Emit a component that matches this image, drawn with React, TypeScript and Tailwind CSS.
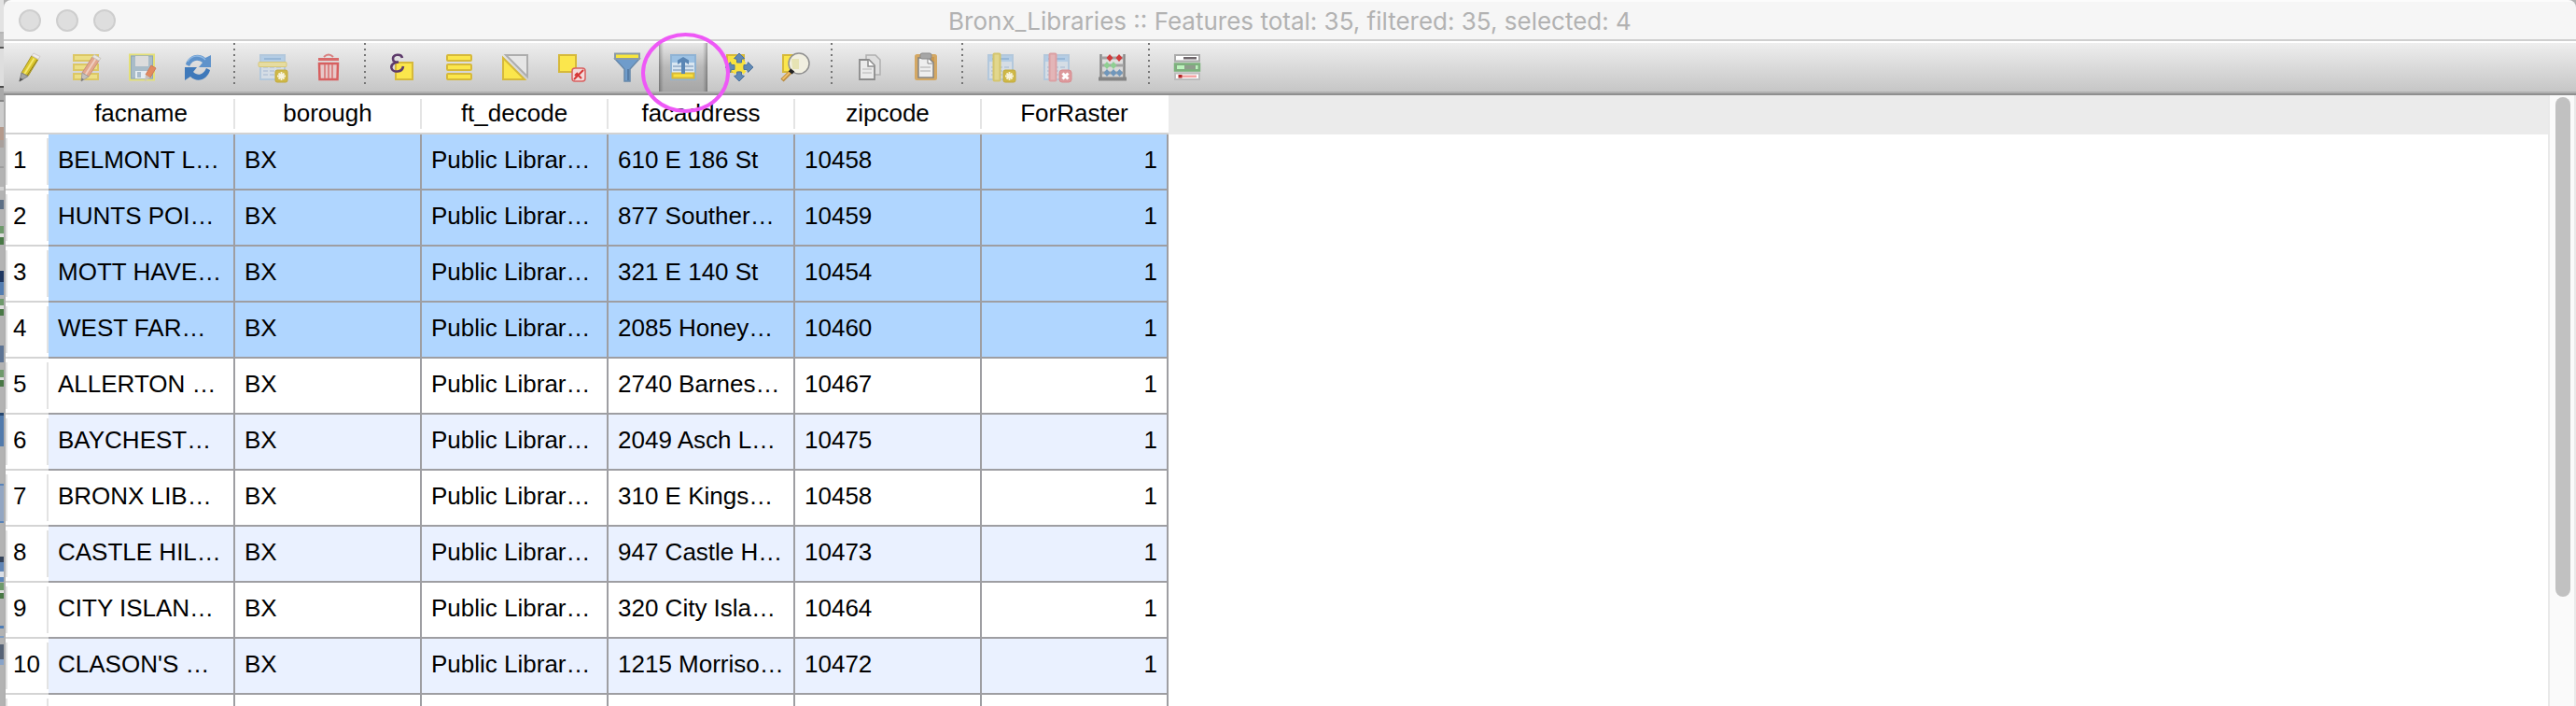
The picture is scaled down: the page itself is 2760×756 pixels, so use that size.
import type { ReactNode } from "react";

type Row = {
  cells: string[];
  selected?: boolean;
};

const columns = ["facname", "borough", "ft_decode", "facaddress", "zipcode", "ForRaster"];

const rows: Row[] = [
  { cells: ["BELMONT L…", "BX", "Public Librar…", "610 E 186 St", "10458", "1"], selected: true },
  { cells: ["HUNTS POI…", "BX", "Public Librar…", "877 Souther…", "10459", "1"], selected: true },
  { cells: ["MOTT HAVE…", "BX", "Public Librar…", "321 E 140 St", "10454", "1"], selected: true },
  { cells: ["WEST FAR…", "BX", "Public Librar…", "2085 Honey…", "10460", "1"], selected: true },
  { cells: ["ALLERTON …", "BX", "Public Librar…", "2740 Barnes…", "10467", "1"] },
  { cells: ["BAYCHEST…", "BX", "Public Librar…", "2049 Asch L…", "10475", "1"] },
  { cells: ["BRONX LIB…", "BX", "Public Librar…", "310 E Kings…", "10458", "1"] },
  { cells: ["CASTLE HIL…", "BX", "Public Librar…", "947 Castle H…", "10473", "1"] },
  { cells: ["CITY ISLAN…", "BX", "Public Librar…", "320 City Isla…", "10464", "1"] },
  { cells: ["CLASON'S …", "BX", "Public Librar…", "1215 Morriso…", "10472", "1"] },
];

function Icon({ children }: { children: ReactNode }) {
  return (
    <svg viewBox="0 0 36 36" className="size-9 shrink-0" fill="none" aria-hidden="true">
      {children}
    </svg>
  );
}

function ToolButton({ label, active, children }: { label: string; active?: boolean; children: ReactNode }) {
  return (
    <button
      type="button"
      aria-label={label}
      aria-pressed={active}
      className={
        active
          ? "flex h-[52px] w-[52px] shrink-0 items-center justify-center bg-[linear-gradient(90deg,#00000050_0,#00000028_2px,transparent_5px,transparent_47px,#00000028_50px,#00000050_52px),linear-gradient(#e8e8e8,#b9b9b9_50%,#a6a6a6)]"
          : "flex h-[52px] w-[52px] shrink-0 items-center justify-center"
      }
    >
      <Icon>{children}</Icon>
    </button>
  );
}

function Separator() {
  return (
    <div className="mr-0.5 flex w-2.5 shrink-0 justify-center pb-1">
      <div className="h-11 w-0.5 bg-[repeating-linear-gradient(#757575_0px,#757575_2px,transparent_2px,transparent_6px)]" />
    </div>
  );
}

function Pencil({ body, dark }: { body: string; dark: string }) {
  return (
    <>
      <path d="M20 7 27 11 16 28 9 24Z" fill={body} stroke={dark} strokeWidth="1" />
      <path d="M23.500 9 12.500 26" stroke="#fff" strokeOpacity=".45" strokeWidth="2" />
      <path d="M20 7 22 4.500 29 8.500 27 11Z" fill="#e9e6e2" stroke="#c9c5c0" strokeWidth="1" />
      <path d="M9 24 16 28 8 33Z" fill="#c4c0bd" stroke="#a39e9a" strokeWidth="1" />
      <path d="M8.500 29.500 11 31 8 33Z" fill="#777" />
    </>
  );
}

function PaleGrid() {
  return (
    <>
      <rect x="5" y="5" width="26" height="26" fill="#d5dde5" stroke="#b3c8dc" strokeWidth="2" />
      <rect x="6" y="6" width="24" height="6" fill="#b4cde5" />
      <path d="M9 9H27" stroke="#8fb0d2" strokeWidth="1.500" />
      <path d="M8 18H28M8 22H28M8 26H28" stroke="#b5c4d8" strokeWidth="1.500" strokeDasharray="5 2" />
    </>
  );
}

function StarBadge() {
  return (
    <>
      <rect x="21" y="21" width="13" height="13" rx="2" fill="#cfb847" stroke="#c2aa3c" />
      <path d="M27.500 23V32M23 27.500H32M24.500 24.500 30.500 30.500M30.500 24.500 24.500 30.500" stroke="#f7f3dc" strokeWidth="1.800" />
    </>
  );
}

function Toolbar() {
  return (
    <div
      role="toolbar"
      aria-label="Attribute table tools"
      className="flex h-14 shrink-0 gap-2 overflow-hidden border-b-2 border-[#8f8f8f] bg-[linear-gradient(#eeeeee,#c6c6c6_52px,#b0b0b0_52px)] pl-0.5"
    >
      <ToolButton label="Toggle editing mode">
        <path d="M20 5.500 27 9.500 16 27.500 9 24Z" fill="#d9c52c" stroke="#a8962a" strokeWidth="1" />
        <path d="M22.500 8.500 12 25.500" stroke="#f5e870" strokeWidth="2" />
        <path d="M26 10 15 27" stroke="#8f7d18" strokeWidth="1" />
        <path d="M20 5.500 22 3 29 6.500 27 9.500Z" fill="#f0ecec" stroke="#cfc9c9" />
        <path d="M9 24 16 27.500 7 33Z" fill="#a5a5a5" stroke="#808080" />
        <path d="M7.500 29.500 11 31 6.500 33.500Z" fill="#555" />
      </ToolButton>
      <ToolButton label="Toggle multi edit mode">
        <g fill="#ecdf86" stroke="#dcc765" strokeWidth="2">
          <rect x="5" y="5" width="26" height="6" />
          <rect x="5" y="15" width="26" height="6" />
          <rect x="5" y="25" width="26" height="6" />
        </g>
        <g transform="translate(5 0)">
          <Pencil body="#e2a78d" dark="#c98f7a" />
        </g>
      </ToolButton>
      <ToolButton label="Save edits">
        <rect x="5" y="4.500" width="26" height="27" fill="#a9bcc8" stroke="#e4e077" strokeWidth="2" />
        <rect x="6.500" y="6" width="23" height="24" stroke="#8fa6b5" />
        <rect x="11" y="6" width="14" height="11" fill="#dcdcdc" />
        <rect x="11" y="22" width="14" height="8" fill="#e6edf2" />
        <rect x="13" y="23" width="4" height="6" fill="#aabccb" />
        <path d="M28 16 33 19 27 29 22 26Z" fill="#e28a5f" stroke="#cf7a55" />
        <path d="M22 26 27 29 21 33Z" fill="#c9c2bd" />
      </ToolButton>
      <ToolButton label="Reload the table">
        <path d="M5 15C7 6 18 1 26 8L32 5V18H19L23 13C18 9 12 10 9 17Z" fill="#5f93cb" />
        <path d="M31 21C29 30 18 36 10 28L4 32V18H17L13 23C18 28 24 26 27 19Z" fill="#3f79ba" />
        <path d="M7 12C11 5 20 4 26 10" stroke="#8fb8e3" strokeWidth="1.500" />
      </ToolButton>
      <Separator />
      <ToolButton label="Add feature">
        <PaleGrid />
        <rect x="3" y="12.500" width="30" height="5" rx="1" fill="#e6dca0" stroke="#d8c878" />
        <StarBadge />
      </ToolButton>
      <ToolButton label="Delete selected features">
        <path d="M13 7Q18 2 23 7" stroke="#d98080" strokeWidth="2" />
        <path d="M7 9.500H29" stroke="#d96a6a" strokeWidth="3" />
        <path d="M8 14H28L27.500 31H8.500Z" fill="#e8c9c9" stroke="#d75f5f" strokeWidth="2.500" />
        <path d="M14 15V30M18 15V30M22 15V30" stroke="#da7d7d" strokeWidth="1.800" />
      </ToolButton>
      <Separator />
      <ToolButton label="Select features using an expression">
        <rect x="10" y="13" width="18" height="18" fill="#fbe64c" stroke="#d6b93a" strokeWidth="2" />
        <path
          d="M17 8C16 3 7 4 7 9C7 12 10 13 13 12.500C8 13 4.500 15 5.500 19C7 24 17 24 18 17"
          stroke="#5d3a6b"
          strokeWidth="2.600"
        />
      </ToolButton>
      <ToolButton label="Select all">
        <g fill="#fbe64c" stroke="#d6b93a" strokeWidth="2">
          <rect x="5" y="5" width="26" height="6" rx="1" />
          <rect x="5" y="15" width="26" height="6" rx="1" />
          <rect x="5" y="25" width="26" height="6" rx="1" />
        </g>
      </ToolButton>
      <ToolButton label="Invert selection">
        <path d="M8 5H31V28Z" fill="#e6e6e6" stroke="#adadad" strokeWidth="2" />
        <path d="M5 8V31H28Z" fill="#fbe64c" stroke="#d6b93a" strokeWidth="2" />
      </ToolButton>
      <ToolButton label="Deselect all">
        <rect x="5" y="5" width="18" height="18" fill="#fbe64c" stroke="#d6b93a" strokeWidth="2" />
        <rect x="19" y="19" width="14" height="14" rx="3" fill="#f3dada" stroke="#d96060" strokeWidth="1.500" />
        <path d="M21 31 31 21M24 25 29 30M22 27 25 24" stroke="#d63636" strokeWidth="2" />
      </ToolButton>
      <ToolButton label="Filter features using form">
        <path d="M5 9H31L21 20V33H15V20Z" fill="#6f9ccb" stroke="#6688ab" strokeWidth="1.500" />
        <path d="M19 20V32" stroke="#4d729a" strokeWidth="1.500" />
        <rect x="5" y="3.500" width="26" height="5.500" fill="#f8e63c" stroke="#8a9aa5" strokeWidth="2" />
      </ToolButton>
      <ToolButton label="Move selection to top" active>
        <rect x="5" y="5" width="26" height="26" fill="#d9e6f1" stroke="#8fb3d4" strokeWidth="2" />
        <rect x="6" y="6" width="24" height="7" fill="#9cc1e3" />
        <path d="M7 17H29M7 21H29" stroke="#a2b9d2" strokeWidth="2" />
        <rect x="6.500" y="24.500" width="23" height="5" fill="#f8e23f" stroke="#d8b93a" strokeWidth="2" />
        <path d="M18 7 24 10.500V15L20 12.500V25H16V12.500L12 15V10.500Z" fill="#5a86b5" />
      </ToolButton>
      <ToolButton label="Pan map to the selected rows">
        <rect x="5" y="5" width="18" height="18" fill="#f8e23f" stroke="#d6b93a" strokeWidth="2" />
        <path d="M12 12 24 24M24 12 12 24" stroke="#f8e23f" strokeWidth="4" />
        <g fill="#6189b5" stroke="#4e739d">
          <path d="M18 3 23.500 8.500 20.500 9.500V13H15.500V9.500L12.500 8.500Z" />
          <path d="M18 33 23.500 27.500 20.500 26.500V23H15.500V26.500L12.500 27.500Z" />
          <path d="M3 18 8.500 12.500 9.500 15.500H13V20.500H9.500L8.500 23.500Z" />
          <path d="M33 18 27.500 12.500 26.500 15.500H23V20.500H26.500L27.500 23.500Z" />
        </g>
      </ToolButton>
      <ToolButton label="Zoom map to the selected rows">
        <rect x="5" y="5" width="18" height="18" fill="#fbe64c" stroke="#d6b93a" strokeWidth="2" />
        <path d="M13 23 4 32" stroke="#b98a3c" strokeWidth="4.500" />
        <path d="M12.500 23 4.500 31" stroke="#f0c069" strokeWidth="2" />
        <circle cx="22" cy="14" r="11" fill="#f1efe0" stroke="#909090" strokeWidth="1.500" />
        <path d="M14 9H22V20H15Z" fill="#e6e3b4" />
        <path d="M12 21 16 24" stroke="#222" strokeWidth="4" />
      </ToolButton>
      <Separator />
      <ToolButton label="Copy selected rows to clipboard">
        <path d="M14 5H24L29 10V26H14Z" fill="#dedede" stroke="#b0b0b0" strokeWidth="1.500" />
        <path d="M7 10H17L23 16V31H7Z" fill="#eaeaea" stroke="#8c8c8c" strokeWidth="1.800" />
        <path d="M16 10V17H23" fill="#fff" stroke="#8c8c8c" strokeWidth="1.500" />
        <path d="M10 20H20M10 24H20" stroke="#d0d0d0" strokeWidth="2" />
      </ToolButton>
      <ToolButton label="Paste features from clipboard">
        <rect x="7.500" y="5.500" width="21" height="25" rx="1" fill="#c89850" stroke="#d4a864" strokeWidth="3" />
        <path d="M10 8H21L26 13V29H10Z" fill="#eee" stroke="#858585" strokeWidth="1.500" />
        <path d="M20 9V14H25" fill="#fff" stroke="#858585" />
        <path d="M12 18H23M12 22H23" stroke="#cdcdcd" strokeWidth="2" />
        <rect x="12" y="3" width="12" height="6" rx="2" fill="#a6a6a6" stroke="#8b8b8b" />
      </ToolButton>
      <Separator />
      <ToolButton label="New field">
        <PaleGrid />
        <rect x="10.500" y="3.500" width="7" height="29" rx="1" fill="#e2d78c" stroke="#d4c56e" strokeWidth="2" />
        <StarBadge />
      </ToolButton>
      <ToolButton label="Delete field">
        <PaleGrid />
        <rect x="10.500" y="3.500" width="7" height="29" rx="1" fill="#e3b5b7" stroke="#dba0a3" strokeWidth="2" />
        <rect x="21" y="21" width="13" height="13" rx="3" fill="#dd9a9d" stroke="#d88c90" />
        <path d="M24.500 24.500 30.500 30.500M30.500 24.500 24.500 30.500" stroke="#fff" strokeWidth="3" />
      </ToolButton>
      <ToolButton label="Open field calculator">
        <path d="M5.500 4V30M30.500 4V30" stroke="#8a8a8a" strokeWidth="2.500" />
        <path d="M6 8H30M6 16H30M6 24H30" stroke="#a3a3a3" strokeWidth="3" />
        <path d="M3 30.500H33" stroke="#858585" strokeWidth="4" />
        <g fill="#cf3b3b">
          <path d="M15 4 18.500 8 15 12 11.500 8Z" />
          <path d="M25 4 28.500 8 25 12 21.500 8Z" />
        </g>
        <g fill="#8fcf92">
          <path d="M12 12 15.500 16 12 20 8.500 16Z" />
          <path d="M19 12 22.500 16 19 20 15.500 16Z" />
        </g>
        <g fill="#7097bb">
          <path d="M12 20 15.500 24 12 28 8.500 24Z" />
          <path d="M19 20 22.500 24 19 28 15.500 24Z" />
          <path d="M25.500 20 29 24 25.500 28 22 24Z" />
        </g>
      </ToolButton>
      <Separator />
      <ToolButton label="Conditional formatting">
        <rect x="5" y="5" width="26" height="6.500" fill="#fff" stroke="#ababab" strokeWidth="2" />
        <rect x="14" y="7" width="14" height="2.500" fill="#6e666b" />
        <rect x="5" y="14.500" width="26" height="7" fill="#8f9d8c" stroke="#7cb27c" strokeWidth="2.500" />
        <rect x="7" y="16" width="8" height="4" fill="#bdf5bd" />
        <rect x="27" y="16" width="2.500" height="4" fill="#bdf5bd" />
        <rect x="5" y="24.500" width="26" height="6.500" fill="#fff" stroke="#bcbcbc" strokeWidth="2" />
        <rect x="10" y="26.500" width="18" height="2.500" fill="#f5a3a3" />
        <rect x="8.500" y="26" width="4" height="3.500" fill="#b22424" />
      </ToolButton>
    </div>
  );
}

function IndexCell({ children }: { children?: ReactNode }) {
  return (
    <th scope="row" className="border-b-2 border-[#d4d4d4] bg-white p-0 text-left font-normal">
      <div className="h-[50px] border-x-2 border-[#e3e3e3] pt-2 pl-1.5 leading-[30px]">{children}</div>
    </th>
  );
}

function DataTable() {
  return (
    <table className="w-[1246px] shrink-0 table-fixed border-separate border-spacing-0 self-start bg-white">
      <colgroup>
        <col className="w-[46px]" />
        {columns.map((name) => (
          <col key={name} className="w-[200px]" />
        ))}
      </colgroup>
      <thead>
        <tr className="h-[42px]">
          <td className="border-b-2 border-[#d2d2d2] p-0" />
          {columns.map((name) => (
            <th key={name} scope="col" className="border-b-2 border-[#d2d2d2] p-0 font-normal [&:last-child>div]:border-transparent">
              <div className="h-8 border-r-2 border-[#e4e4e4] leading-[30px]">{name}</div>
            </th>
          ))}
        </tr>
      </thead>
      <tbody>
        {rows.map((row, i) => (
          <tr
            key={row.cells[0]}
            aria-selected={row.selected}
            className={row.selected ? "h-[60px] bg-[#b0d6ff]" : i % 2 === 1 ? "h-[60px] bg-[#eaf1ff]" : "h-[60px] bg-white"}
          >
            <IndexCell>{i + 1}</IndexCell>
            {row.cells.map((cell, c) => (
              <td
                key={columns[c]}
                className="overflow-hidden border-r-2 border-b-2 border-[#9e9ea2] px-2.5 pt-0 pb-1 whitespace-nowrap last:text-right"
              >
                {cell}
              </td>
            ))}
          </tr>
        ))}
        <tr className="h-[60px] bg-white">
          <IndexCell />
          {columns.map((name) => (
            <td key={name} className="border-r-2 border-b-2 border-[#9e9ea2]" />
          ))}
        </tr>
      </tbody>
    </table>
  );
}

const sliver: [number, number, string][] = [
  [0, 34, "#e2e2e2"],
  [34, 2, "#b5b5b5"],
  [36, 14, "#bdbdbd"],
  [50, 2, "#555555"],
  [52, 40, "#dedede"],
  [92, 2, "#4b4b4b"],
  [94, 13, "#a9a9a9"],
  [107, 2, "#858585"],
  [109, 27, "#cdcdcd"],
  [136, 14, "#b59a8c"],
  [150, 8, "#a9a09c"],
  [178, 2, "#9d9d9d"],
  [200, 4, "#d2d2d2"],
  [214, 10, "#5d6f85"],
  [242, 8, "#6f9a6c"],
  [250, 4, "#dddddd"],
  [254, 8, "#497846"],
  [290, 12, "#1f3760"],
  [302, 14, "#547db0"],
  [320, 7, "#6f9a6c"],
  [327, 4, "#dddddd"],
  [331, 7, "#497846"],
  [370, 18, "#5d7494"],
  [396, 8, "#6f9a6c"],
  [404, 3, "#dddddd"],
  [407, 7, "#497846"],
  [442, 3, "#27476f"],
  [445, 33, "#527bac"],
  [518, 2, "#5a84b8"],
  [520, 38, "#93a6c2"],
  [558, 2, "#5a84b8"],
  [596, 6, "#34435a"],
  [602, 10, "#6085b5"],
  [612, 6, "#dadfe6"],
  [618, 5, "#5a84b8"],
  [624, 8, "#6f9a6c"],
  [632, 3, "#dddddd"],
  [635, 6, "#497846"],
  [670, 3, "#4f7db5"],
  [681, 2, "#7d9cc2"],
  [690, 16, "#566275"],
  [706, 6, "#88a3c8"],
];

export default function App() {
  return (
    <div className="relative flex h-screen overflow-hidden bg-[#b3b3b3] font-['Liberation_Sans',Arial,sans-serif] text-[26px] text-black">
      <svg width="4" height="756" className="w-1 shrink-0" aria-hidden="true">
        {sliver.map(([y, h, fill]) => (
          <rect key={y} y={y} width="4" height={h} fill={fill} />
        ))}
      </svg>

      <main className="flex min-w-0 flex-1 flex-col">
        <header className="flex h-[46px] shrink-0 items-center rounded-t-lg border-b-2 border-white bg-[linear-gradient(#fcfcfc_2px,#f6f6f6_2px,#f6f6f6_42px,#cfcfcf_42px)] px-4">
          <div className="flex flex-1 gap-4">
            <button type="button" aria-label="Close" className="size-6 rounded-full border-2 border-[#cecece] bg-[#dedede]" />
            <button type="button" aria-label="Minimize" className="size-6 rounded-full border-2 border-[#cecece] bg-[#dedede]" />
            <button type="button" aria-label="Zoom" className="size-6 rounded-full border-2 border-[#cecece] bg-[#dedede]" />
          </div>
          <h1 className="pt-0.5 font-[Inter,sans-serif] text-[26px] leading-8 whitespace-nowrap text-[#b2b2b2]">
            Bronx_Libraries :: Features total: 35, filtered: 35, selected: 4
          </h1>
          <div className="flex-1" />
        </header>

        <Toolbar />

        <div className="flex min-h-0 flex-1 overflow-hidden border-l-2 border-[#b0b0b0] bg-white">
          <DataTable />
          <div className="min-w-0 flex-1">
            <div className="h-[42px] bg-[#ebebeb]" />
          </div>
          <div className="w-[30px] shrink-0 border-x-2 border-[#e9e9e9] bg-[#fafafa] pt-0.5 pl-1.5">
            <div className="h-[82%] w-4 rounded-full bg-[#c1c1c1]" />
          </div>
        </div>
      </main>

      <div className="pointer-events-none absolute top-[35px] left-[687px] h-[86px] w-[95px] rounded-[50%] border-4 border-[#ee58f6]" />
    </div>
  );
}
